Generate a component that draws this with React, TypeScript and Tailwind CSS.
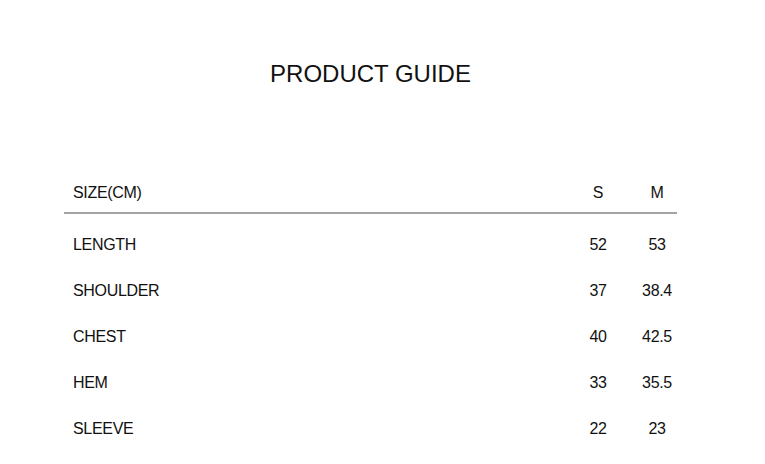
import React from 'react';

const ROWS = [
  { label: 'LENGTH', s: '52', m: '53' },
  { label: 'SHOULDER', s: '37', m: '38.4' },
  { label: 'CHEST', s: '40', m: '42.5' },
  { label: 'HEM', s: '33', m: '35.5' },
  { label: 'SLEEVE', s: '22', m: '23' },
];

const App: React.FC = () => {
  return (
    <div className="min-h-[464px] w-[765px] bg-white text-[#111] font-['Liberation_Sans',Arial,sans-serif]">
      <div className="ml-[64px] w-[613px] pt-[60px]">
        <h1 className="text-center text-[24px] leading-[28px]">PRODUCT GUIDE</h1>

        <div className="mt-[86px]">
          {/* header */}
          <div className="flex h-[40px] items-center border-b-2 border-[#a3a3a3] pl-[9px] text-[16px] tracking-[-0.02em]">
            <span className="flex-1">SIZE(CM)</span>
            <div className="flex gap-[19px]">
              <span className="w-[40px] text-center">S</span>
              <span className="w-[40px] text-center">M</span>
            </div>
          </div>

          {/* rows */}
          <div className="pt-[8px]">
            {ROWS.map((row) => (
              <div key={row.label} className="flex h-[46px] items-center pl-[9px] text-[16px] tracking-[-0.02em]">
                <span className="flex-1">{row.label}</span>
                <div className="flex gap-[19px]">
                  <span className="w-[40px] text-center">{row.s}</span>
                  <span className="w-[40px] text-center">{row.m}</span>
                </div>
              </div>
            ))}
          </div>
        </div>
      </div>
    </div>
  );
};

export default App;
